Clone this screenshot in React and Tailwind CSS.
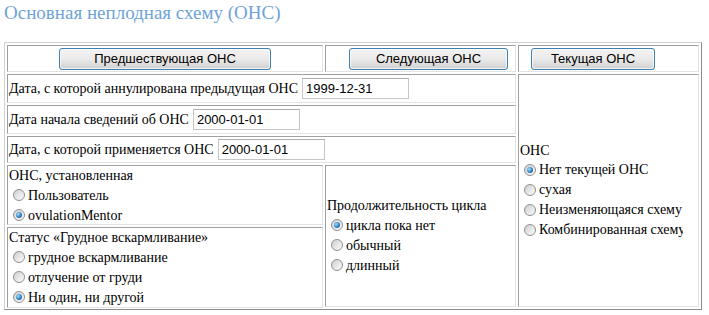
const cell =
  "border border-t-[#a0a0a0] border-l-[#a0a0a0] border-b-[#e3e3e3] border-r-[#e3e3e3] bg-white";

const sans = "font-['Liberation_Sans']";

function Radio({ checked }) {
  return (
    <span className="ml-[4px] mr-[3px] flex h-[12px] w-[12px] shrink-0 items-center justify-center rounded-full border border-[#8f8f8f] bg-gradient-to-br from-[#cfcfcf] to-[#fdfdfd]">
      {checked && (
        <span className="h-[6px] w-[6px] rounded-full bg-[radial-gradient(circle_at_35%_35%,#a6dcfa,#2f82c4_55%,#0d3f70)]" />
      )}
    </span>
  );
}

function RadioRow({ label, checked }) {
  return (
    <div className="flex h-[20px] items-center whitespace-nowrap">
      <Radio checked={checked} />
      <span>{label}</span>
    </div>
  );
}

function Button({ children, className = "" }) {
  return (
    <button
      className={`h-[22px] rounded-[3px] border border-[#3c7fb1] bg-gradient-to-b from-[#f2f2f2] via-[#ebebeb] to-[#d0d0d0] ${sans} text-[13px] leading-[18px] text-black shadow-[inset_0_0_0_1px_rgba(255,255,255,0.7)] ${className}`}
    >
      {children}
    </button>
  );
}

function DateRow({ label, value }) {
  return (
    <div className={`${cell} col-span-2 flex items-center px-[1px]`}>
      <span className="whitespace-nowrap">{label}</span>
      <input
        readOnly
        value={value}
        className={`ml-[4px] h-[21px] w-[107px] border border-[#c6c6c6] border-t-[#abadb3] px-[3px] ${sans} text-[13px] text-black outline-none`}
      />
    </div>
  );
}

export default function App() {
  return (
    <div className="h-[315px] w-[709px] overflow-hidden bg-white font-['Liberation_Serif'] text-[14px] leading-[17px] text-black">
      <h1 className="pl-[4px] pt-[1px] text-[19px] leading-[23px] font-normal text-[#6ea3d8]">
        Основная неплодная схему (ОНС)
      </h1>

      <div className="ml-[4px] mt-[18px] grid w-[698px] grid-cols-[316px_191px_181px] grid-rows-[27px_29px_29px_27px_142px] gap-[2px] border border-t-[#d0d0d0] border-l-[#d0d0d0] border-b-[#8c8c8c] border-r-[#8c8c8c] p-[2px]">
        <div className={`${cell} flex items-center justify-center`}>
          <Button className="w-[212px]">Предшествующая ОНС</Button>
        </div>
        <div className={`${cell} flex items-center`}>
          <Button className="ml-[23px] w-[159px]">Следующая ОНС</Button>
        </div>
        <div className={`${cell} flex items-center`}>
          <Button className="ml-[12px] w-[124px]">Текущая ОНС</Button>
        </div>

        <DateRow label="Дата, с которой аннулирована предыдущая ОНС" value="1999-12-31" />

        <div className={`${cell} row-span-4 flex flex-col justify-center px-[1px]`}>
          <div className="w-[163px] overflow-hidden">
            <div className="h-[18px]">ОНС</div>
            <RadioRow label="Нет текущей ОНС" checked />
            <RadioRow label="сухая" />
            <RadioRow label="Неизменяющаяся схему" />
            <RadioRow label="Комбинированная схему" />
          </div>
        </div>

        <DateRow label="Дата начала сведений об ОНС" value="2000-01-01" />
        <DateRow label="Дата, с которой применяется ОНС" value="2000-01-01" />

        <div className="flex flex-col gap-[2px]">
          <div className={`${cell} h-[60px] px-[1px] pt-[1px]`}>
            <div className="h-[18px]">ОНС, установленная</div>
            <RadioRow label="Пользователь" />
            <RadioRow label="ovulationMentor" checked />
          </div>
          <div className={`${cell} flex-1 px-[1px] pt-[1px]`}>
            <div className="h-[18px]">Статус «Грудное вскармливание»</div>
            <RadioRow label="грудное вскармливание" />
            <RadioRow label="отлучение от груди" />
            <RadioRow label="Ни один, ни другой" checked />
          </div>
        </div>

        <div className={`${cell} flex flex-col justify-center px-[1px]`}>
          <div className="h-[18px]">Продолжительность цикла</div>
          <RadioRow label="цикла пока нет" checked />
          <RadioRow label="обычный" />
          <RadioRow label="длинный" />
        </div>
      </div>
    </div>
  );
}
